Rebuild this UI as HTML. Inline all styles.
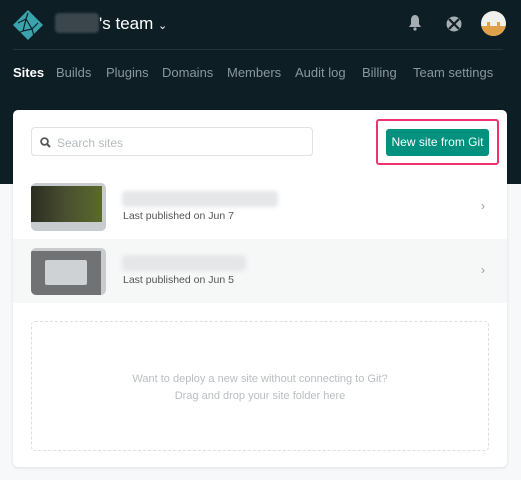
<!DOCTYPE html><html><head><style>
*{box-sizing:border-box;margin:0;padding:0}
body{width:521px;height:480px;background:#f6f8f9;font-family:"Liberation Sans",sans-serif;position:relative;overflow:hidden}
.top{position:absolute;left:0;top:0;width:521px;height:184px;background:#0e1e25}
.abs{position:absolute}
.nav span{position:absolute;top:65px;font-size:13px;color:#8a979e;white-space:nowrap}
.card{position:absolute;left:13px;top:110px;width:494px;height:357px;background:#fff;border-radius:5px;box-shadow:0 1px 3px rgba(0,0,0,.1);overflow:hidden}
.blur{position:absolute;background:#e4e6e8;filter:blur(2px);border-radius:4px}
</style></head><body>
<div class="top"></div>
<svg class="abs" style="left:12px;top:9px" width="32" height="32" viewBox="0 0 32 32"><path d="M16 1L31 16L16 31L1 16Z" fill="#3aa3ad"/><path d="M6 14L14 10L20 20L26 14M14 10L11 22L20 20M16 4L14 10M11 22L6 24M20 20L22 27" stroke="#0e1e25" stroke-width="1.2" fill="none"/></svg>
<div class="blur" style="left:55px;top:13px;width:44px;height:20px;background:#3a464c;filter:blur(1px)"></div>
<div class="abs" style="left:99px;top:14px;font-size:17px;color:#fff">'s team <span style="font-size:11px">⌄</span></div>
<svg class="abs" style="left:408px;top:14px" width="14" height="17" viewBox="0 0 14 17"><path d="M7 1C4 1 3 4 3 6V10L1 13H13L11 10V6C11 4 10 1 7 1Z" fill="#a4adb1"/><circle cx="7" cy="15" r="1.6" fill="#a4adb1"/></svg>
<svg class="abs" style="left:446px;top:16px" width="16" height="16" viewBox="0 0 16 16"><circle cx="8" cy="8" r="7.5" fill="#a4adb1"/><path d="M3 3L13 13M13 3L3 13" stroke="#0e1e25" stroke-width="2.2"/></svg>
<div class="abs" style="left:481px;top:11px;width:25px;height:25px;border-radius:50%;background:#f0f0ec;overflow:hidden"><div style="position:absolute;left:0;top:15px;width:25px;height:10px;background:#e0a04a"></div><div style="position:absolute;left:6px;top:11px;width:3px;height:4px;background:#e0a04a"></div><div style="position:absolute;left:16px;top:11px;width:3px;height:4px;background:#e0a04a"></div></div>
<div class="abs" style="left:13px;top:49px;width:490px;height:1px;background:#24333a"></div>
<div class="nav"><span style="left:13px;color:#fff;font-weight:bold">Sites</span><span style="left:56px">Builds</span><span style="left:106px">Plugins</span><span style="left:162px">Domains</span><span style="left:227px">Members</span><span style="left:295px">Audit log</span><span style="left:362px">Billing</span><span style="left:413px">Team settings</span></div>
<div class="card">
<div class="abs" style="left:18px;top:17px;width:282px;height:29px;border:1px solid #dfe3e5;border-radius:4px"></div>
<svg class="abs" style="left:27px;top:27px" width="11" height="11" viewBox="0 0 11 11"><circle cx="4.5" cy="4.5" r="3.4" stroke="#555" stroke-width="1.8" fill="none"/><path d="M7 7L10 10" stroke="#555" stroke-width="2"/></svg>
<div class="abs" style="left:44px;top:26px;font-size:12px;color:#b5bbbf">Search sites</div>
<div class="abs" style="left:363px;top:9px;width:123px;height:46px;border:2px solid #f0336f;border-radius:3px"></div>
<div class="abs" style="left:373px;top:19px;width:103px;height:27px;background:#00917f;border-radius:3px;color:#fff;font-size:12px;line-height:27px;text-align:center">New site from Git</div>
<div class="abs" style="left:0;top:129px;width:494px;height:64px;background:#f6f8f8"></div>
<div class="abs" style="left:18px;top:73px;width:75px;height:48px;background:#c9cccf;border-radius:5px;overflow:hidden"><div style="position:absolute;left:0;top:3px;width:71px;height:36px;background:linear-gradient(90deg,#2b2d22,#4a5030 50%,#5a6a2a)"></div></div>
<div class="blur" style="left:109px;top:81px;width:156px;height:16px"></div>
<div class="abs" style="left:110px;top:100px;font-size:10.5px;color:#555">Last published on Jun 7</div>
<div class="abs" style="left:468px;top:89px;font-size:12px;color:#999">›</div>
<div class="abs" style="left:18px;top:138px;width:75px;height:47px;background:#c9cccf;border-radius:5px;overflow:hidden"><div style="position:absolute;left:0;top:3px;width:70px;height:44px;background:#707274"></div><div style="position:absolute;left:14px;top:12px;width:42px;height:25px;background:#cfd2d4;border-radius:2px"></div></div>
<div class="blur" style="left:109px;top:145px;width:124px;height:16px"></div>
<div class="abs" style="left:110px;top:164px;font-size:10.5px;color:#555">Last published on Jun 5</div>
<div class="abs" style="left:468px;top:153px;font-size:12px;color:#999">›</div>
<div class="abs" style="left:18px;top:211px;width:458px;height:130px;border:1px dashed #dcdfe1;border-radius:4px;text-align:center;color:#b9bec2;font-size:11px;line-height:17px;padding-top:49px">Want to deploy a new site without connecting to Git?<br>Drag and drop your site folder here</div>
</div>
</body></html>
